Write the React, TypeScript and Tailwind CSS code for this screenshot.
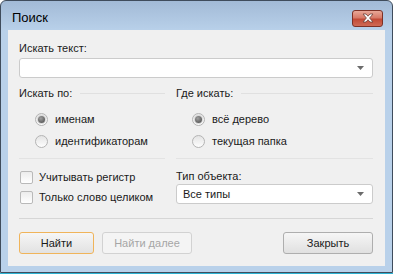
function Arrow() {
  return (
    <svg width="7" height="4" viewBox="0 0 7 4" className="shrink-0">
      <path d="M0 0h7L3.5 4z" fill="#6b6b6b" />
    </svg>
  )
}

function Combo({ value }: { value?: string }) {
  return (
    <div className="h-[20px] flex items-center justify-between pl-[6px] pr-[8px] bg-white border border-[#cbcbcb] rounded-[3px]">
      <span>{value}</span>
      <Arrow />
    </div>
  )
}

function Radio({ label, checked }: { label: string; checked?: boolean }) {
  return (
    <div className="h-[16px] flex items-center gap-[7px] pl-[16px] whitespace-nowrap">
      <div className="w-[13px] h-[13px] shrink-0 rounded-full border border-[#b4b4b4] bg-[linear-gradient(to_bottom,#e4e4e4,#fdfdfd)] flex items-center justify-center">
        {checked && (
          <div className="w-[7px] h-[7px] rounded-full bg-[radial-gradient(circle_at_40%_35%,#a0a0a0,#454545)] ring-1 ring-[#d8d8d8]" />
        )}
      </div>
      <span>{label}</span>
    </div>
  )
}

function Check({ label }: { label: string }) {
  return (
    <div className="h-[16px] flex items-center gap-[6px] pl-[1px] whitespace-nowrap">
      <div className="w-[13px] h-[13px] shrink-0 rounded-[2px] border border-[#b9b9b9] bg-[linear-gradient(to_bottom,#ececec,#ffffff)]" />
      <span>{label}</span>
    </div>
  )
}

function GroupHead({ label }: { label: string }) {
  return (
    <div className="h-[16px] flex items-center gap-[8px] whitespace-nowrap">
      <span>{label}</span>
      <div className="flex-1 h-px bg-[#e0e0e0] mt-[1px]" />
    </div>
  )
}

export default function App() {
  return (
    <div className="w-[393px] h-[274px] border-b border-[#2cb2d2] font-['Segoe_UI','Liberation_Sans',sans-serif] text-[11px] text-[#1a1a1a]">
      <div className="h-[273px] flex flex-col border border-[#3f4c5c] rounded-t-[6px] bg-[linear-gradient(to_bottom,#a2bad6_0px,#b9d1ea_30px,#b9d1ea_100%)]">
        {/* Title bar */}
        <div className="h-[29px] shrink-0 flex items-center justify-between pt-[5px] pl-[11px] pr-[9px]">
          <span className="text-[13px] text-black">Поиск</span>
          <div className="w-[31px] h-[17px] rounded-[3px] border border-[#7d3126] bg-[linear-gradient(to_bottom,#e8a898_0%,#d77a68_45%,#c24a36_55%,#cf6a55_100%)] flex items-center justify-center">
            <svg width="14" height="10" viewBox="0 0 14 10">
              <path d="M2 1h3l2 2.2L9 1h3L8.6 5 12 9H9L7 6.8 5 9H2l3.4-4z" fill="#ffffff" stroke="#6a4038" strokeWidth="0.8" strokeLinejoin="round" />
            </svg>
          </div>
        </div>

        {/* Client area */}
        <div className="flex-1 mx-[7px] mb-[6px] bg-[#f0f0f0] pl-[11px] pr-[12px] pt-[10px] flex flex-col">
          <div className="h-[16px] leading-[16px]">Искать текст:</div>
          <div className="mt-[2px]">
            <Combo />
          </div>

          <div className="grid grid-cols-[146px_1fr] gap-x-[11px] mt-[7px]">
            <div className="flex flex-col">
              <GroupHead label="Искать по:" />
              <div className="mt-[10px]">
                <Radio label="именам" checked />
              </div>
              <div className="mt-[6px]">
                <Radio label="идентификаторам" />
              </div>
              <div className="mt-[9px] h-px bg-[#e3e3e3]" />
            </div>
            <div className="flex flex-col">
              <GroupHead label="Где искать:" />
              <div className="mt-[10px]">
                <Radio label="всё дерево" checked />
              </div>
              <div className="mt-[6px]">
                <Radio label="текущая папка" />
              </div>
              <div className="mt-[9px] h-px bg-[#e3e3e3]" />
            </div>
          </div>

          <div className="grid grid-cols-[146px_1fr] gap-x-[11px] mt-[10px]">
            <div className="flex flex-col gap-[4px]">
              <Check label="Учитывать регистр" />
              <Check label="Только слово целиком" />
            </div>
            <div className="flex flex-col">
              <div className="h-[15px] leading-[15px]">Тип объекта:</div>
              <Combo value="Все типы" />
            </div>
          </div>

          <div className="mt-[13px] h-px bg-[#d6d6d6]" />

          <div className="mt-[13px] flex items-center">
            <button className="w-[75px] h-[22px] rounded-[3px] border border-[#f0b45a] bg-[linear-gradient(to_bottom,#f6f6f6,#e2e2e2)] text-[#1a1a1a]">
              Найти
            </button>
            <button className="ml-[8px] w-[90px] h-[22px] rounded-[3px] border border-[#d2d2d2] bg-[#f4f4f4] text-[#a6a6a6]">
              Найти далее
            </button>
            <button className="ml-auto w-[90px] h-[22px] rounded-[3px] border border-[#aeaeae] bg-[linear-gradient(to_bottom,#f6f6f6,#e0e0e0)] text-[#1a1a1a]">
              Закрыть
            </button>
          </div>
        </div>
      </div>
    </div>
  )
}
